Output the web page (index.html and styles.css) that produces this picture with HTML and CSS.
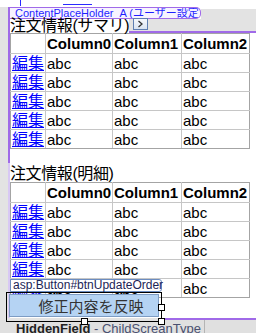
FILE: index.html
```html
<!DOCTYPE html>
<html lang="ja">
<head>
  <meta charset="UTF-8" />
  <title>注文情報</title>
  <link rel="stylesheet" href="styles.css">
</head>
<body>
  <div class="top-clip"><span class="clip-a"></span><span class="clip-b"></span></div>

  <div class="section first">
    <div class="tab-row">
      <div class="tab">ContentPlaceHolder_A (ユーザー設定)</div>
      <div class="tab-fill"></div>
    </div>
    <div class="title-row">
      <div class="title">注文情報(サマリ)</div>
      <div class="title-fill">
        <span class="smart-tag">
          <svg width="7" height="8" viewBox="0 0 7 8"><polyline points="1.5,1 5,4 1.5,7" fill="none" stroke="#333" stroke-width="1.3"/></svg>
        </span>
      </div>
    </div>
    <table class="grid">
      <colgroup><col class="c-edit"><col class="c0"><col class="c1"><col class="c2"></colgroup>
      <thead>
        <tr><th></th><th>Column0</th><th>Column1</th><th>Column2</th></tr>
      </thead>
      <tbody>
        <tr><td><a class="edit" href="#">編集</a></td><td>abc</td><td>abc</td><td>abc</td></tr>
        <tr><td><a class="edit" href="#">編集</a></td><td>abc</td><td>abc</td><td>abc</td></tr>
        <tr><td><a class="edit" href="#">編集</a></td><td>abc</td><td>abc</td><td>abc</td></tr>
        <tr><td><a class="edit" href="#">編集</a></td><td>abc</td><td>abc</td><td>abc</td></tr>
        <tr><td><a class="edit" href="#">編集</a></td><td>abc</td><td>abc</td><td>abc</td></tr>
      </tbody>
    </table>
    <div class="spacer"></div>
  </div>

  <div class="section second">
    <div class="title title-2">注文情報(明細)</div>
    <table class="grid">
      <colgroup><col class="c-edit"><col class="c0"><col class="c1"><col class="c2"></colgroup>
      <thead>
        <tr><th></th><th>Column0</th><th>Column1</th><th>Column2</th></tr>
      </thead>
      <tbody>
        <tr><td><a class="edit" href="#">編集</a></td><td>abc</td><td>abc</td><td>abc</td></tr>
        <tr><td><a class="edit" href="#">編集</a></td><td>abc</td><td>abc</td><td>abc</td></tr>
        <tr><td><a class="edit" href="#">編集</a></td><td>abc</td><td>abc</td><td>abc</td></tr>
        <tr><td><a class="edit" href="#">編集</a></td><td>abc</td><td>abc</td><td>abc</td></tr>
        <tr><td><a class="edit" href="#">編集</a></td><td>abc</td><td>abc</td><td>abc</td></tr>
      </tbody>
    </table>
    <div class="asp-tag">asp:Button#btnUpdateOrder</div>
    <div class="btn-area">
      <button class="update-btn">修正内容を反映</button>
      <div class="sel-frame"></div>
      <span class="handle h-bottom"></span>
      <span class="handle h-right"></span>
      <span class="handle h-corner"></span>
    </div>
  </div>

  <div class="tab-line"></div>
  <div class="tabbar">
    <div class="tab-item"><b>HiddenField</b> - ChildScreanType</div>
  </div>
</body>
</html>
```

FILE: styles.css
```css
body {
  margin: 0;
  width: 256px;
  height: 333px;
  overflow: hidden;
  background: #e3e3e3;
  font-family: "Liberation Sans", "Noto Sans CJK JP", sans-serif;
  color: #000;
}
.top-clip {
  display: flex;
  height: 7px;
  background: #fff;
}
.clip-a {
  margin-left: 20px;
  width: 1px;
  height: 6px;
  background: #2a2aff;
}
.clip-b {
  margin-left: 42px;
  margin-top: 4px;
  width: 29px;
  height: 1px;
  background: #2a2aff;
}
.section {
  margin-left: 8px;
  background: #fff;
}
.section.first {
  border-left: 2px solid #a06ae8;
}
.section.second {
  position: relative;
  padding-top: 3px;
  border-left: 2px solid #d8c8f4;
}
.tab-row {
  display: flex;
  height: 12px;
}
.tab {
  box-sizing: border-box;
  width: 191px;
  height: 12px;
  padding-left: 5px;
  border: 1px solid #a06ae8;
  border-left: none;
  border-radius: 0 5px 5px 0;
  background: #f7f3ff;
  color: #1f1fff;
  font-size: 11px;
  line-height: 11px;
  white-space: nowrap;
  overflow: hidden;
}
.tab-fill {
  flex: 1;
  margin-top: 2px;
  background: #e3e3e3;
}
.title-row {
  display: flex;
  height: 14px;
}
.title {
  font-size: 16px;
  line-height: 14px;
  letter-spacing: -0.4px;
  white-space: nowrap;
  background: #fff;
}
.title-fill {
  flex: 1;
  box-sizing: border-box;
  background: #e3e3e3;
  border-bottom: 2px solid #a06ae8;
}
.smart-tag {
  display: flex;
  align-items: center;
  justify-content: center;
  box-sizing: border-box;
  width: 15px;
  height: 12px;
  margin: -1px 0 0 4px;
  border: 1px solid #5f7fb2;
  background: linear-gradient(#f6f8fc, #d9e3f1);
}
.grid {
  border-collapse: collapse;
  table-layout: fixed;
  width: 239px;
  font-size: 15px;
}
.c-edit { width: 35px; }
.c0 { width: 67px; }
.c1 { width: 69px; }
.c2 { width: 68px; }
.grid th,
.grid td {
  border: 1px solid #c6c6c6;
  padding: 0 1px;
  text-align: left;
  white-space: nowrap;
  line-height: 17px;
}
.grid th {
  font-weight: bold;
  line-height: 19px;
}
.grid tr > :first-child { border-left-color: #a4a4a4; }
.grid tr > :last-child { border-right-color: #a4a4a4; }
.grid thead th { border-top-color: #a4a4a4; }
.grid tbody tr:last-child td { border-bottom-color: #a4a4a4; }
.edit {
  color: #0000ff;
  font-size: 16px;
  font-family: "Noto Sans CJK JP", sans-serif;
  line-height: 17px;
}
.spacer {
  height: 14px;
}
.title-2 {
  line-height: 16px;
}
.asp-tag {
  position: absolute;
  left: 0;
  top: 116px;
  box-sizing: border-box;
  width: 152px;
  height: 13px;
  padding-left: 2px;
  border: 1px solid #6b8cc0;
  border-radius: 0 3px 3px 0;
  background: #fff;
  color: #1c2456;
  font-size: 12px;
  line-height: 11px;
  white-space: nowrap;
}
.btn-area {
  position: relative;
  height: 24px;
  margin-top: -4px;
}
.update-btn {
  display: block;
  box-sizing: border-box;
  width: 150px;
  height: 23px;
  margin-left: -1px;
  padding: 0 0 0 14px;
  border: 1px solid #7d9cc4;
  background: #b5d3f3;
  color: #333;
  font-family: "Noto Sans CJK JP", sans-serif;
  font-size: 15px;
  line-height: 21px;
}
.sel-frame {
  position: absolute;
  left: -4px;
  top: -2px;
  box-sizing: border-box;
  width: 156px;
  height: 30px;
  border: 1px solid #000;
}
.handle {
  position: absolute;
  box-sizing: border-box;
  width: 7px;
  height: 7px;
  border: 1px solid #000;
  background: #fff;
}
.h-bottom { left: 71px; top: 24px; }
.h-right { left: 148px; top: 10px; }
.h-corner { left: 148px; top: 24px; }
.tab-line {
  height: 2px;
  margin-left: 162px;
  background: #a06ae8;
}
.tabbar {
  display: flex;
  height: 13px;
  background: #e0e0e0;
}
.tab-item {
  box-sizing: border-box;
  width: 205px;
  padding-left: 16px;
  border-right: 1px solid #b4b4b4;
  color: #4a5070;
  font-size: 13px;
  line-height: 17px;
  white-space: nowrap;
  overflow: hidden;
}
.tab-item b {
  color: #222;
}
```
